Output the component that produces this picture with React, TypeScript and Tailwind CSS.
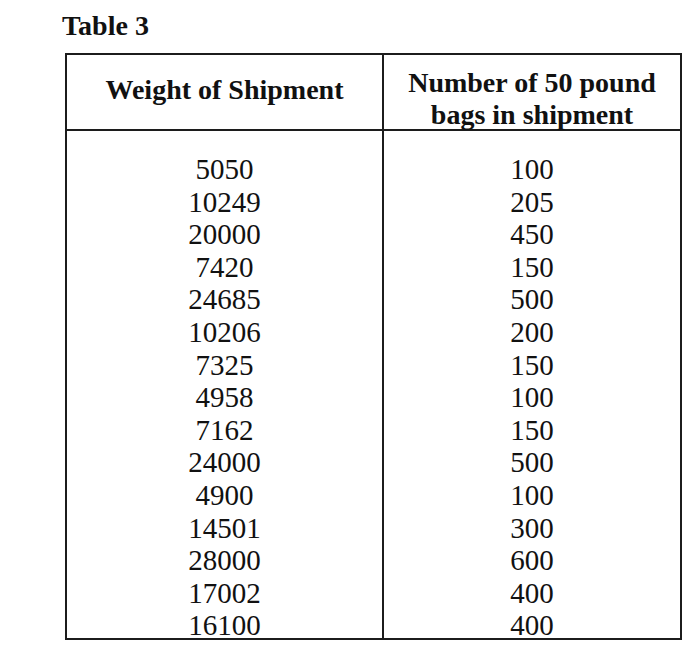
const ROWS: [string, string][] = [
  ["5050", "100"],
  ["10249", "205"],
  ["20000", "450"],
  ["7420", "150"],
  ["24685", "500"],
  ["10206", "200"],
  ["7325", "150"],
  ["4958", "100"],
  ["7162", "150"],
  ["24000", "500"],
  ["4900", "100"],
  ["14501", "300"],
  ["28000", "600"],
  ["17002", "400"],
  ["16100", "400"],
];

export default function App() {
  return (
    <div className="min-h-[667px] w-[700px] bg-white pl-[62px] pt-[12px] text-[#111] [font-family:'Liberation_Serif','Times_New_Roman',serif]">
      <h1 className="text-[28px] font-bold leading-[28px]">Table 3</h1>

      <div className="mt-[13px] ml-[3px] w-[617px] border-2 border-[#1c1c1c]">
        {/* header */}
        <div className="flex h-[76px] border-b-2 border-[#1c1c1c] text-[28px] font-bold leading-[32px]">
          <div className="w-[315px] pt-[19px] text-center">Weight of Shipment</div>
          <div className="w-[298px] border-l-2 border-[#1c1c1c] pt-[12px] text-center">
            Number of 50 pound
            <br />
            bags in shipment
          </div>
        </div>

        {/* body */}
        <div className="flex h-[507px] text-[29px] leading-[32.6px]">
          <div className="w-[315px] pt-[22px] text-center">
            {ROWS.map(([w]) => (
              <div key={w + "w"}>{w}</div>
            ))}
          </div>
          <div className="w-[298px] border-l-2 border-[#1c1c1c] pt-[22px] text-center">
            {ROWS.map(([w, n]) => (
              <div key={w + "n"}>{n}</div>
            ))}
          </div>
        </div>
      </div>
    </div>
  );
}
